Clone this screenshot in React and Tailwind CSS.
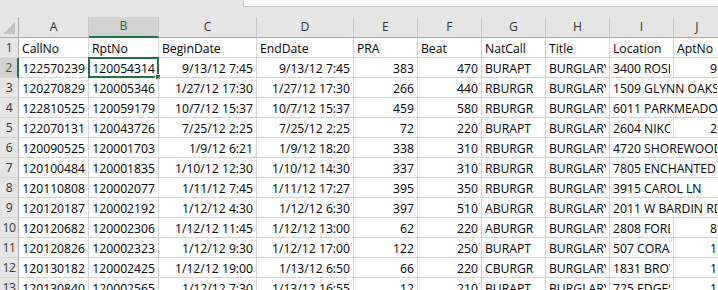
const cols = [
  { key: 'A', w: 'w-[70px]' },
  { key: 'B', w: 'w-[70px]' },
  { key: 'C', w: 'w-[98px]' },
  { key: 'D', w: 'w-[97px]' },
  { key: 'E', w: 'w-[64px]' },
  { key: 'F', w: 'w-[64px]' },
  { key: 'G', w: 'w-[64px]' },
  { key: 'H', w: 'w-[64px]' },
  { key: 'I', w: 'w-[64px]' },
  { key: 'J', w: 'w-[47px]' },
]

// alignment per column for data rows (numbers / dates sit right)
const align = ['r', 'r', 'r', 'r', 'r', 'r', 'l', 'l', 'l', 'r']

const rows = [
  ['CallNo', 'RptNo', 'BeginDate', 'EndDate', 'PRA', 'Beat', 'NatCall', 'Title', 'Location', 'AptNo'],
  ['122570239', '120054314', '9/13/12 7:45', '9/13/12 7:45', '383', '470', 'BURAPT', 'BURGLARY', '3400 ROSE', '9'],
  ['120270829', '120005346', '1/27/12 17:30', '1/27/12 17:30', '266', '440', 'RBURGR', 'BURGLARY', '1509 GLYNN OAKS', ''],
  ['122810525', '120059179', '10/7/12 15:37', '10/7/12 15:37', '459', '580', 'RBURGR', 'BURGLARY', '6011 PARKMEADOW', ''],
  ['122070131', '120043726', '7/25/12 2:25', '7/25/12 2:25', '72', '220', 'BURAPT', 'BURGLARY', '2604 NIKC', '2'],
  ['120090525', '120001703', '1/9/12 6:21', '1/9/12 18:20', '338', '310', 'RBURGR', 'BURGLARY', '4720 SHOREWOOD', ''],
  ['120100484', '120001835', '1/10/12 12:30', '1/10/12 14:30', '337', '310', 'RBURGR', 'BURGLARY', '7805 ENCHANTED', ''],
  ['120110808', '120002077', '1/11/12 7:45', '1/11/12 17:27', '395', '350', 'RBURGR', 'BURGLARY', '3915 CAROL LN', ''],
  ['120120187', '120002192', '1/12/12 4:30', '1/12/12 6:30', '397', '510', 'ABURGR', 'BURGLARY', '2011 W BARDIN RD', ''],
  ['120120682', '120002306', '1/12/12 11:45', '1/12/12 13:00', '62', '220', 'ABURGR', 'BURGLARY', '2808 FORE', '8'],
  ['120120826', '120002323', '1/12/12 9:30', '1/12/12 17:00', '122', '250', 'BURAPT', 'BURGLARY', '507 CORA', '1'],
  ['120130182', '120002425', '1/12/12 19:00', '1/13/12 6:50', '66', '220', 'CBURGR', 'BURGLARY', '1831 BROV', '1'],
  ['120130840', '120002565', '1/12/12 7:30', '1/13/12 16:55', '12', '210', 'BURAPT', 'BURGLARY', '725 EDGES', '1'],
]

function Cell({ w, right, children, selected }) {
  return (
    <div
      className={`relative ${w} h-[20px] shrink-0 flex items-center border-r border-b border-[#d4d4d4] pl-[3px] pr-[3px] pt-[2px]`}
    >
      <span className={`block overflow-hidden whitespace-nowrap leading-[16px] w-full ${right ? 'text-right' : 'text-left'}`}>
        {children}
      </span>
      {selected && (
        <>
          <span className="absolute -left-[1px] -top-[1px] -right-[1px] -bottom-[1px] border-2 border-[#217346]" />
          <span className="absolute -right-[3px] -bottom-[3px] w-[6px] h-[6px] bg-[#217346] border border-white" />
        </>
      )}
    </div>
  )
}

export default function App() {
  return (
    <div
      className="w-[718px] h-[290px] overflow-hidden bg-white text-[12.2px] text-black"
      style={{ fontFamily: '"Open Sans", "Liberation Sans", sans-serif' }}
    >
      {/* formula bar strip */}
      <div className="h-[17px] flex bg-[#e6e6e6] pl-[243px]">
        <div className="h-[7px] w-[600px] shrink-0 bg-white border-l border-b border-[#c6c6c6]" />
      </div>

      {/* column headers */}
      <div className="flex h-[21px] bg-[#e6e6e6] w-max">
        <div className="w-[19px] shrink-0 h-full border-r border-b border-[#ababab] flex items-end justify-end p-[3px]">
          <svg width="12" height="12" viewBox="0 0 12 12">
            <polygon points="12,0 12,12 0,12" fill="#c2c2c2" />
          </svg>
        </div>
        {cols.map(c => (
          <div
            key={c.key}
            className={`${c.w} shrink-0 h-full flex items-center justify-center border-r border-[#c6c6c6] ${c.key === 'B' ? 'bg-[#d2d2d2] border-b-2 border-b-[#217346] text-[#1e6b40]' : 'border-b border-b-[#ababab] text-[#333]'}`}
          >
            {c.key}
          </div>
        ))}
      </div>

      {/* rows */}
      {rows.map((r, i) => {
        const n = i + 1
        const spanI = r[9] === ''
        return (
          <div key={n} className="flex w-max">
            <div
              className={`w-[19px] shrink-0 h-[20px] flex items-center justify-center pt-[1px] border-b border-[#d4d4d4] ${n === 2 ? 'bg-[#d2d2d2] border-r-2 border-r-[#217346] text-[#1e6b40]' : 'bg-[#e6e6e6] border-r border-r-[#ababab] text-[#333]'}`}
            >
              <span className="leading-[16px] tracking-[-0.5px]">{n}</span>
            </div>
            {cols.map((c, j) => {
              if (j === 9 && spanI) return null
              const w = j === 8 && spanI ? 'w-[111px]' : c.w
              const right = n > 1 && align[j] === 'r'
              return (
                <Cell key={c.key} w={w} right={right} selected={n === 2 && j === 1}>
                  {r[j]}
                </Cell>
              )
            })}
          </div>
        )
      })}
    </div>
  )
}
